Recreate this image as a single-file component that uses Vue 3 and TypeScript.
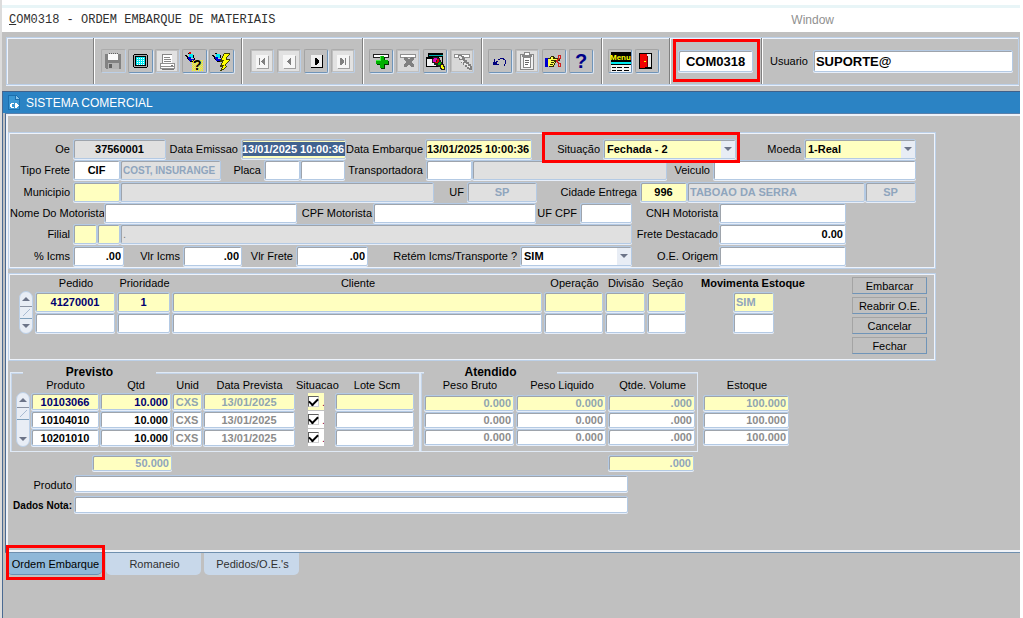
<script setup lang="ts">
interface Shape { d?: string; f: string; s?: string; t?: string; x?: number; y?: number; size?: number }
interface Tool { name: string; label: string; off?: boolean }
interface Cell { k: 'label' | 'field' | 'combo'; t?: string; id?: string; c?: string; label?: string }

const dots = (x: number, y: number, cols: number, rows: number): string => {
  let d = ''
  for (let r = 0; r < rows; r++)
    for (let c = 0; c < cols; c++) d += `M${x + c * 2} ${y + r * 2}h1v1h-1z`
  return d
}
const torch: Shape[] = [
  { d: 'M3 6h2v1h-2zM4 7h2v1h-2zM5 8h2v2h-2zM6 10h1v1h-1z', f: '#000' },
  { d: 'M7 5h4v4h-4z', f: '#00e8f0' },
  { d: 'M6 8h3v2h3v3h-3v-1h-2v-2h-1z', f: '#0000d0' },
  { d: 'M6 4h2v1h-2zM11 6h1v3h-1zM12 9h1v4h-1zM8 12h3v1h-3z', f: '#000' }
]
const plaque = (off: boolean): Shape[] => off
  ? [{ d: 'M2 2h20v20h-20z', f: '#e2e2e2' }, { d: 'M6 6h12v13h-12z', f: '#f6f6f6' }, { d: 'M18 7h1v13h-12v-1h11z', f: '#a0a0a0' }]
  : [{ d: 'M7 6h11v12h-11z', f: '#efefef' }, { d: 'M18 6h1v13h-12v-1h11z', f: '#000' }]

const icons: Record<string, Shape[]> = {
  save: [
    { d: 'M4 5h16v15h-15l-1-1z', f: '#828282' },
    { d: 'M7 5h10v6h-10z', f: '#fafafa' },
    { d: 'M7 14h11v6h-11z', f: '#b4b4b4' },
    { d: 'M8 15h3v4h-3z', f: '#626262' },
    { d: dots(8, 4, 5, 1), f: '#606060' }
  ],
  screen: [
    { d: 'M6 5h13v1h1v12h-1v1h-13v-1h-1v-12h1z', f: '#000' },
    { d: 'M6 6h13v12h-13z', f: '#a8a8a8' },
    { d: 'M7 7h11v10h-11z', f: '#000' },
    { d: 'M8 8h9v8h-9z', f: '#00e8f0' },
    { d: dots(9, 9, 4, 4), f: '#fff' }
  ],
  print: [
    { d: 'M2 2h20v20h-20z', f: '#e2e2e2' },
    { d: 'M7 5h10v9h-10z', f: '#888' }, { d: 'M8 6h9v8h-9z', f: '#fff' },
    { d: 'M9 8h6v1h-6zM9 10h7v1h-7zM9 12h7v1h-7z', f: '#888' },
    { d: 'M5 14h15v6h-15z', f: '#909090' }, { d: 'M6 15h13v2h-13zM6 18h13v1h-13z', f: '#fff' },
    { d: 'M7 20h12v1h-12zM16 16h2v1h-2z', f: '#777' }
  ],
  torchHelp: [
    ...torch, { d: 'M7 3h2v2h-2z', f: '#e00000' },
    { d: dots(10, 11, 6, 6) + dots(11, 12, 5, 5), f: '#ffff00' },
    { t: '?', f: '#000', x: 11, y: 21, size: 14 }
  ],
  torchRun: [
    ...torch,
    { d: 'M15 4h6v2h-1v1h-1v1h-1v2h3v2h-1v1h-1v1h-1v1h-1v2h1v1h-1v1h-1v1h-1v1h-2v1h-2v-1h1v-2h1v-1h-2v-2h1v-2h1v-1h-2v-2h1v-2h1v-2h1v-2h1z', f: '#404000' },
    { d: 'M16 5h4v1h-1v1h-1v1h-1v3h3v1h-1v1h-1v1h-1v1h-1v2h1v1h-1v1h-1v1h-2v-1h1v-2h1v-1h-2v-2h1v-2h1v-1h-2v-2h1v-2h1v-2h1z', f: '#ffff00' }
  ],
  first: [...plaque(true), { d: 'M9 9h1v7h-1zM14 9h1v7h-1l-3-3v-1z', f: '#808080' }],
  prev: [...plaque(true), { d: 'M13 9h1v7h-1l-3-3v-1z', f: '#808080' }],
  next: [...plaque(false), { d: 'M11 9h1l3 3v1l-3 3h-1z', f: '#000' }],
  last: [...plaque(true), { d: 'M14 9h1v7h-1zM9 9h1l3 3v1l-3 3h-1z', f: '#808080' }],
  add: [
    { d: 'M4 5h16v4h-16z', f: '#202020' }, { d: 'M5 6h14v2h-14z', f: '#fff' },
    { d: 'M12 8h4v4h4v4h-4v4h-4v-4h-4v-4h4z', f: '#003c00' },
    { d: 'M11 7h4v4h4v4h-4v4h-4v-4h-4v-4h4z', f: '#00b000' },
    { d: 'M11 7h1v5h-5v-1h4z', f: '#40f040' }
  ],
  remove: [
    { d: 'M2 2h20v20h-20z', f: '#d8d8d8' },
    { d: 'M4 5h16v4h-16z', f: '#909090' }, { d: 'M5 6h14v2h-14z', f: '#fff' },
    { d: 'M8 8h3v1h1v1h2v-1h1v-1h3v3h-1v1h-1v2h1v1h1v3h-3v-1h-1v-1h-2v1h-1v1h-3v-3h1v-1h1v-2h-1v-1h-1z', f: '#808080' }
  ],
  query: [
    { d: 'M5 4h15v12h-15z', f: '#000' }, { d: 'M6 6h14v1h-14z', f: '#00b0b0' }, { d: 'M16 8h3v7h-3z', f: '#c0c0c0' },
    { d: 'M3 8h13v10h-13z', f: '#000' }, { d: 'M4 10h11v7h-11z', f: '#f4f4f4' },
    { d: 'M10 8h5v1h2v2h1v2h1v2h2v2h1v4h-4v-1h-1v-2h-2v-1h-2v-1h-2v-2h-2v-4h1z', f: '#202020' },
    { d: 'M11 9h3v2h-1v2h-3v-3h1z', f: '#e000c0' }, { d: 'M14 10h2v3h-1v1h-3v-1h2z', f: '#e00000' },
    { d: 'M16 13h2v2h-1v1h-2v-2h1z', f: '#00b000' }, { d: 'M18 16h2v2h1v2h-2v-1h-1z', f: '#ffff00' }
  ],
  cancelQuery: [
    { d: 'M2 2h20v20h-20z', f: '#d8d8d8' },
    { d: 'M4 5h16v4h-16z', f: '#909090' }, { d: 'M5 6h14v2h-14z', f: '#fff' },
    { d: 'M8 6h4v1h2v2h1v2h2v2h2v2h2v2h1v4h-3v-1h-2v-2h-2v-2h-2v-2h-2v-3h-2v-2h-1z', f: '#808080' },
    { d: 'M9 7h2v1h1v2h-2v-1h-1zM11 11h2v1h1v1h-1v1h-1v-1h-1zM14 14h2v1h2v2h2v2h-1v-1h-2v-2h-3z', f: '#e8e8e8' }
  ],
  undo: [{ d: 'M6 10h1v3h1v-1h2v-2h2v-1h4v1h1v1h1v4h-1v2h-1v-2h1v-4h-2v-1h-3v1h-2v2h-1v2h2v1h-6z', f: '#00007c' }],
  clip: [
    { d: 'M2 2h20v20h-20z', f: '#dedede' },
    { d: 'M5 5h14v16h-14z', f: '#888' }, { d: 'M6 6h12v14h-12z', f: '#f0f0f0' },
    { d: 'M8 8h8v11h-8z', f: '#888' }, { d: 'M9 9h6v9h-6z', f: '#fff' },
    { d: 'M9 3h6v3h2v2h-10v-2h2z', f: '#888' }, { d: 'M10 4h4v2h-4z', f: '#fff' },
    { d: 'M10 11h4v1h-4zM10 13h4v1h-4zM10 15h3v1h-3z', f: '#666' }
  ],
  hand: [
    { d: 'M3 9h3v9h-3z', f: '#0000d0' },
    { d: 'M6 9h2v-1h1v-1h3v1h1v1h5v3h-4v2h-1v2h-1v2h-5v-1h-1z', f: '#303000' },
    { d: 'M6 10h3v-2h2v2h6v1h-5v2h1v1h-1v2h-1v1h-5z', f: '#ffff50' },
    { d: 'M9 11h3v1h-3zM9 13h3v1h-3zM8 15h3v1h-3z', f: '#303000' },
    { d: 'M16 6h3v4h-3zM17 7v2h1v-2zM16 14h3v4h-3zM17 15v2h1v-2zM15 10h2v1h-2zM14 11h2v2h-2zM15 13h2v1h-2z', f: '#d02020' }
  ],
  help: [{ t: '?', f: '#000088', x: 6, y: 19, size: 20 }],
  menu: [
    { d: 'M3 3h20v10h-20z', f: '#000' }, { t: 'Menu', f: '#ffff00', x: 2, y: 11, size: 8 },
    { d: 'M3 13h20v2h-20z', f: '#00e8f0' }, { d: 'M3 15h20v1h-20z', f: '#000' },
    { d: 'M3 16h20v7h-20z', f: '#f4f4f4' },
    { d: 'M4 18h4v1h-4zM9 18h5v1h-5zM16 18h5v1h-5zM4 21h4v1h-4zM9 21h5v1h-5zM16 21h5v1h-5z', f: '#000' }
  ],
  exit: [
    { d: 'M4 4h13v16h-13z', f: '#000' }, { d: 'M12 5h4v13h-4z', f: '#e8e8e8' },
    { d: 'M5 5h7v13h-2v1h-5z', f: '#f00000' }, { d: 'M9 12h2v1h-2z', f: '#ffff00' },
    { d: 'M12 7h1v11h-1z', f: '#700000' }
  ]
}

const groups: Tool[][] = [
  [{ name: 'save', label: 'Salvar', off: true }, { name: 'screen', label: 'Tela' }, { name: 'print', label: 'Imprimir', off: true },
    { name: 'torchHelp', label: 'Entrar consulta' }, { name: 'torchRun', label: 'Executar consulta' }],
  [{ name: 'first', label: 'Primeiro', off: true }, { name: 'prev', label: 'Anterior', off: true },
    { name: 'next', label: 'Proximo' }, { name: 'last', label: 'Ultimo', off: true }],
  [{ name: 'add', label: 'Inserir' }, { name: 'remove', label: 'Remover', off: true },
    { name: 'query', label: 'Consultar' }, { name: 'cancelQuery', label: 'Cancelar consulta', off: true }],
  [{ name: 'undo', label: 'Desfazer' }, { name: 'clip', label: 'Colar', off: true },
    { name: 'hand', label: 'Recortar' }, { name: 'help', label: 'Ajuda' }],
  [{ name: 'menu', label: 'Menu' }, { name: 'exit', label: 'Sair' }]
]

const L = (t: string, id: string, c = ''): Cell => ({ k: 'label', t, id, c })
const F = (id: string, t = '', c = ''): Cell => ({ k: 'field', t, id, c })
const rows: Cell[][] = [
  [L('Oe', 'oe'), F('oe', '37560001', 'ro mid'), L('Data Emissao', 'emi'), F('emi', '13/01/2025 10:00:36', 'sel'),
    L('Data Embarque', 'emb'), F('emb', '13/01/2025 10:00:36', 'yel tight'),
    { k: 'combo', label: 'Situação', id: 'sit', t: 'Fechada - 2', c: 'marked yellow' },
    { k: 'combo', label: 'Moeda', id: 'moe', t: '1-Real', c: 'yellow' }],
  [L('Tipo Frete', 'tf'), F('tf', 'CIF', 'mid'), F('tfd', 'COST, INSURANGE', 'ro dim small'), L('Placa', 'pl'), F('pl'), F('pl2'),
    L('Transportadora', 'tr'), F('tr'), F('trd', '', 'ro'), L('Veiculo', 've'), F('ve')],
  [L('Municipio', 'mu'), F('mu', '', 'yel'), F('mud', '', 'ro'), L('UF', 'uf'), F('uf', 'SP', 'ro dim mid'),
    L('Cidade Entrega', 'ci'), F('ci', '996', 'yel mid'), F('cid', 'TABOAO DA SERRA', 'ro dim'), F('ciu', 'SP', 'ro dim mid')],
  [L('Nome Do Motorista', 'nm', 'near'), F('nm'), L('CPF Motorista', 'cpf', 'near'), F('cpf'), L('UF CPF', 'ucp'), F('ucp'),
    L('CNH Motorista', 'cnh', 'near'), F('cnh')],
  [L('Filial', 'fi'), F('fi', '', 'yel'), F('fi2', '', 'yel'), F('fid', '.', 'ro thin'), L('Frete Destacado', 'fd', 'near'), F('fd', '0.00', 'end')],
  [L('% Icms', 'ic'), F('ic', '.00', 'end'), L('Vlr Icms', 'vi'), F('vi', '.00', 'end'), L('Vlr Frete', 'vf'), F('vf', '.00', 'end'),
    { k: 'combo', label: 'Retém Icms/Transporte ?', id: 'ret', t: 'SIM', c: '' }, L('O.E. Origem', 'oo', 'near'), F('oo')]
]

const orderCols = ['Pedido', 'Prioridade', 'Cliente', 'Operação', 'Divisão', 'Seção']
const orders = [['41270001', '1', '', '', '', ''], ['', '', '', '', '', '']]
const actions = ['Embarcar', 'Reabrir O.E.', 'Cancelar', 'Fechar']
const products = ['10103066', '10104010', '10201010']
const weights = ['0.000', '0.000', '.000']
</script>

<template>
  <div class="app">
    <header class="caption">
      <span class="name"><u>C</u>OM0318 - ORDEM EMBARQUE DE MATERIAIS</span>
      <span class="win">Window</span>
    </header>

    <div class="toolbar">
      <div class="group blank"></div>
      <div v-for="(g, i) in groups" :key="i" class="group" :class="'g' + i">
        <button v-for="b in g" :key="b.name" type="button" class="tool" :class="{ off: b.off }" :aria-label="b.label">
          <svg viewBox="0 0 24 24" shape-rendering="crispEdges">
            <template v-for="(s, n) in icons[b.name]" :key="n">
              <text v-if="s.t" :x="s.x" :y="s.y" :font-size="s.size" :fill="s.f" font-weight="bold">{{ s.t }}</text>
              <path v-else :d="s.d" :fill="s.f" :stroke="s.s" fill-rule="evenodd" />
            </template>
          </svg>
        </button>
      </div>
      <div class="group prog">
        <div class="progbox"><input class="fld big mid" value="COM0318" aria-label="Programa"></div>
      </div>
      <div class="group user">
        <label for="usr">Usuario</label>
        <input id="usr" class="fld big" value="SUPORTE@">
      </div>
    </div>

    <main class="window">
      <div class="titlebar">
        <svg viewBox="0 0 12 15" shape-rendering="crispEdges">
          <path d="M0 0h8l4 4v11h-12z" fill="#1b6fae" /><path d="M1 1h6v4h4v9h-10z" fill="#3a97d3" />
          <path d="M8 1l3 3h-3z" fill="#8cc4ea" />
          <path d="M3 8h3v1h-2v3h2v1h-3v-1h-1v-3h1zM7 8h1l3 2v1l-3 2h-1z" fill="#fff" />
        </svg>
        <span>SISTEMA COMERCIAL</span>
      </div>

      <div class="canvas">
        <section class="panel form">
          <div v-for="(r, i) in rows" :key="i" class="row" :class="'r' + i">
            <template v-for="c in r" :key="c.k + c.id">
              <label v-if="c.k === 'label'" :for="c.id" :class="c.c">{{ c.t }}</label>
              <input v-else-if="c.k === 'field'" :id="c.id" class="fld" :class="c.c" :value="c.t" :aria-label="c.id">
              <div v-else class="pair" :class="c.c">
                <label :for="c.id">{{ c.label }}</label>
                <span class="combo"><select :id="c.id" class="fld"><option>{{ c.t }}</option></select></span>
              </div>
            </template>
          </div>
        </section>

        <section class="panel orders">
          <div class="scroll short">
            <button type="button" aria-label="Acima"><i class="up"></i></button><span class="thumb"></span>
            <button type="button" aria-label="Abaixo"><i class="down"></i></button>
          </div>
          <table class="otable">
            <colgroup><col class="o1"><col class="o2"><col><col class="o4"><col class="o5"><col class="o6"><col class="o7"></colgroup>
            <thead><tr><th v-for="h in orderCols" :key="h">{{ h }}</th><th class="strong">Movimenta Estoque</th></tr></thead>
            <tbody>
              <tr v-for="(o, i) in orders" :key="i">
                <td v-for="(v, n) in o" :key="n"><input class="fld mid" :class="{ yel: i === 0, navy: i === 0 }" :value="v" :aria-label="orderCols[n]"></td>
                <td class="mov"><input class="fld dim" :class="{ yel: i === 0 }" :value="i === 0 ? 'SIM' : ''" aria-label="Movimenta Estoque"></td>
              </tr>
            </tbody>
          </table>
          <div class="actions"><button v-for="a in actions" :key="a" type="button">{{ a }}</button></div>
        </section>

        <div class="items">
          <section class="box previsto">
            <h2>Previsto</h2>
            <div class="inner">
              <div class="scroll tall">
                <button type="button" aria-label="Subir"><i class="up"></i></button><span class="thumb"></span>
                <button type="button" aria-label="Descer"><i class="down"></i></button>
              </div>
              <table class="ptable">
                <colgroup><col class="p1"><col class="p2"><col class="p3"><col class="p4"><col class="p5"><col></colgroup>
                <thead><tr><th>Produto</th><th>Qtd</th><th>Unid</th><th>Data Prevista</th><th>Situacao</th><th>Lote Scm</th></tr></thead>
                <tbody>
                  <tr v-for="(p, i) in products" :key="p" :class="{ cur: i === 0 }">
                    <td><input class="fld mid" :value="p" aria-label="Produto"></td>
                    <td><input class="fld end" value="10.000" aria-label="Qtd"></td>
                    <td><input class="fld gray mid" value="CXS" aria-label="Unid"></td>
                    <td><input class="fld gray mid" value="13/01/2025" aria-label="Data Prevista"></td>
                    <td class="chk"><label><input type="checkbox" checked aria-label="Situacao"><span>.</span></label></td>
                    <td class="lote"><input class="fld" value="" aria-label="Lote Scm"></td>
                  </tr>
                </tbody>
              </table>
            </div>
          </section>
          <section class="box atendido">
            <h2>Atendido</h2>
            <table class="wtable">
              <colgroup><col class="w1"><col class="w1"><col></colgroup>
              <thead><tr><th>Peso Bruto</th><th>Peso Liquido</th><th>Qtde. Volume</th></tr></thead>
              <tbody>
                <tr v-for="(p, i) in products" :key="p" :class="{ cur: i === 0 }">
                  <td v-for="(w, n) in weights" :key="n"><input class="fld gray end" :value="w" aria-label="Atendido"></td>
                </tr>
              </tbody>
            </table>
          </section>
          <table class="wtable estoque">
            <thead><tr><th>Estoque</th></tr></thead>
            <tbody>
              <tr v-for="(p, i) in products" :key="p" :class="{ cur: i === 0 }"><td><input class="fld gray end" value="100.000" aria-label="Estoque"></td></tr>
            </tbody>
          </table>
        </div>

        <div class="totals">
          <input class="fld yel dim end" value="50.000" aria-label="Total Qtd">
          <input class="fld yel dim end" value=".000" aria-label="Total Volume">
        </div>
        <div class="line"><label for="prd">Produto</label><input id="prd" class="fld"></div>
        <div class="line note"><label for="nota">Dados Nota:</label><input id="nota" class="fld"></div>
      </div>

      <nav class="tabs">
        <button type="button" class="on">Ordem Embarque</button>
        <button type="button">Romaneio</button>
        <button type="button">Pedidos/O.E.'s</button>
      </nav>
    </main>
  </div>
</template>

<style>
html, body { background: #c0c0c0; }
#app { min-height: 100vh; display: flex; }
</style>

<style scoped>
.app {
  flex: 1; min-width: 0; display: flex; flex-direction: column; border-left: 2px solid #dcdcdc; border-right: 3px solid #fff;
  font: 11px/14px "Liberation Sans", Arial, sans-serif; color: #000;
}
.app * { box-sizing: border-box; }
.caption {
  height: 32px; padding: 8px 186px 0 7px; display: flex; justify-content: space-between; align-items: center;
  background: linear-gradient(#fff 5px, #e8f5f7 5px, #e8f5f7 8px, #fff 8px);
}
.name { font: 12px/24px "Liberation Mono", monospace; color: #303030; }
.win { font-size: 12px; color: #909090; }

.toolbar { margin: 5px 1px 6px 4px; height: 48px; display: flex; border: 1px solid #bcd0e8; box-shadow: inset 1px 1px #eef3fb, 0 1px #e6eefa; }
.group { display: flex; align-items: center; gap: 3px; padding-left: 6px; border-right: 1px solid #808080; box-shadow: 1px 0 #fff; flex: none; }
.blank { width: 87px; }
.g0 { width: 148px; padding-left: 7px; gap: 2px; } .g1 { width: 121px; padding-left: 8px; } .g2 { width: 119px; }
.g3 { width: 120px; } .g4 { width: 68px; }
.tool {
  width: 24px; height: 24px; padding: 0; background: none; border: 1px solid; border-radius: 2px;
  border-color: #a4a4a4 #6f94b8 #6f94b8 #a4a4a4; box-shadow: 1px 1px #dbe6f4;
}
.g0 .tool { width: 25px; }
.tool.off { border-color: #acacac #bcd0e8 #bcd0e8 #acacac; box-shadow: none; }
.tool svg { display: block; width: 24px; height: 24px; margin: -1px; }
.prog { width: 92px; padding: 0; }
.progbox { position: relative; margin-left: 8px; width: 75px; }
.progbox::after, .marked::after, .tabs .on::after { content: ""; position: absolute; border: 3px solid #f00; pointer-events: none; z-index: 2; }
.progbox::after { inset: -11px -7px -10px -5px; }
.user { flex: 1; border: 0; box-shadow: none; padding: 0 5px 0 8px; gap: 5px; }
.user .fld { flex: 1; }

.fld {
  display: block; width: 100%; min-width: 0; height: 20px; margin: 0; padding: 0 2px; outline: 0; border: 1px solid #b4cae4; border-radius: 2px;
  background: #fff; color: #000; font: bold 11px/14px "Liberation Sans", Arial, sans-serif;
  box-shadow: inset 1px 1px #9ea4ac, 0 1px #e6eefa;
}
.big { height: 22px; font-size: 13px; }
.mid { text-align: center; }
.end { text-align: right; padding-right: 2px; }
.ro { background: #e0e0e0; }
.thin { font-weight: normal; color: #808080; }
.yel, .cur .fld { background: #ffffc0; }
.dim { color: #8fa5bd; }
.small { font-size: 10px; }
.gray { color: #8c8c8c; }
.cur .gray { color: #8fa5b0; }
.navy, .cur .fld:not(.gray) { color: #000070; }
.tight { padding: 0 1px; }
.sel { padding: 2px 0; color: #fff; background: linear-gradient(#41628f, #41628f) content-box, #ffffc0; }

.window { flex: 1; background: #c0c0c0; border-left: 1px solid #4a6a92; border-top: 1px solid #40618a; }
.titlebar { height: 21px; padding-left: 5px; display: flex; align-items: center; gap: 6px; background: #2b83c4; color: #fff; font-size: 12px; }
.titlebar svg { width: 12px; height: 15px; }
.canvas {
  margin-left: 2px; border-left: 1px solid #4a6a92; border-top: 1px solid #5880ac; border-bottom: 1px solid #6f8fae; padding: 18px 0 39px 2px;
  box-shadow: inset 2px 2px #eef2f8, inset 0 -2px #f0f3f8;
}
.panel { margin-right: 84px; border: 1px solid #bcd0e8; box-shadow: inset 1px 1px #eef3fb, inset -1px -1px #eef3fb; padding: 1px; }
.form { display: grid; grid-template-rows: 21px 22px 21px 21px 22px 20px; padding: 6px 0 2px 1px; }
.row { display: grid; }
.row label, .user label { text-align: right; padding-right: 3px; line-height: 20px; white-space: nowrap; min-width: 0; }
.user label { padding: 0; }
.row .near { padding-right: 1px; }
.r0 { grid-template-columns: 63px 93px 75px 105px 79px 107px 1fr 180px 19px; }
.r1 { grid-template-columns: 63px 47px 101px 43px 36px 45px 81px 46px 1fr 46px 203px 19px; }
.r2 { grid-template-columns: 63px 47px 1fr 33px 70px 103px 47px 178px 51px 19px; }
.r3 { grid-template-columns: 94px 1fr 76px 163px 44px 52px 87px 127px 89px; }
.r4 { grid-template-columns: 63px 24px 23px 1fr 87px 127px 89px; }
.r5 { grid-template-columns: 63px 51px 59px 59px 54px 72px 1fr 87px 127px 89px; }
.pair { position: relative; display: grid; grid-template-columns: 71px 1fr; }
.pair:nth-child(8) { grid-template-columns: 68px 1fr; }
.r5 .pair { grid-template-columns: 1fr 112px; }
.marked::after { inset: -7px -4px -3px 10px; }
.combo { position: relative; }
.combo select { appearance: none; padding-left: 3px; }
.yellow select { background: #ffffc0; }
.combo::before { content: ""; position: absolute; top: 2px; right: 1px; width: 14px; height: 17px; background: #e8edf5; z-index: 1; pointer-events: none; }
.combo::after { content: ""; position: absolute; top: 8px; right: 4px; border: 4px solid transparent; border-top-color: #6c7488; border-bottom: 0; z-index: 1; pointer-events: none; }

.orders { margin-top: 4px; min-height: 88px; display: flex; align-items: flex-start; padding: 3px 8px 3px 10px; }
table { border-collapse: collapse; table-layout: fixed; }
th { font-weight: normal; padding: 0; white-space: nowrap; line-height: 12px; vertical-align: top; }
td { padding: 0 2px 0 0; vertical-align: top; }
.otable { flex: 1; width: 0; margin: 0 34px 0 2px; }
.otable th { height: 15px; }
.otable th.strong { font-weight: bold; }
.otable td { height: 21px; }
.o1 { width: 82px; } .o2 { width: 55px; } .o4 { width: 61px; } .o5 { width: 42px; } .o6 { width: 41px; } .o7 { width: 130px; }
.otable .mov { padding: 0 44px 0 45px; }
.actions { width: 75px; display: grid; gap: 3px; }
.actions button {
  height: 17px; padding: 0; font: inherit; background: #c0c0c0; border: 1px solid; border-color: #a4a4a4 #6f94b8 #6f94b8 #a4a4a4;
}
.scroll { width: 14px; flex: none; display: flex; flex-direction: column; background: #e8edf5; border: 1px solid #bcd0e8; border-radius: 7px; overflow: hidden; }
.scroll button { height: 14px; flex: none; padding: 0; border: 0; background: none; display: flex; align-items: center; justify-content: center; }
.scroll i { border: 4px solid transparent; border-top: 0; border-bottom-color: #6c7488; }
.scroll .down { border-top: 4px solid #6c7488; border-bottom: 0; }
.thumb { height: 13px; margin-bottom: auto; border-top: 1px solid #8b93a3; border-bottom: 1px solid #7fa0bc; background: linear-gradient(135deg, #e8edf5 47%, #a9bbd2 47%, #a9bbd2 53%, #e8edf5 53%) center / 7px 7px no-repeat; }
.short { height: 43px; margin-top: 14px; }
.tall { height: 55px; margin-top: 13px; }

.items { display: flex; margin: 11px 229px 0 2px; }
.box { border: 1px solid #e0eaf6; box-shadow: inset 1px 1px #c4d4e8; height: 80px; }
.previsto { flex: 1; min-width: 0; }
.atendido { width: 278px; padding-left: 3px; }
.box h2 { margin: -8px 0 0 12px; width: 133px; height: 14px; background: #c0c0c0; text-align: center; font-size: 12px; line-height: 15px; }
.box.atendido h2 { margin-left: 0; }
.inner { display: flex; padding-left: 5px; }
.ptable { flex: 1; width: 0; margin-left: 1px; }
.ptable th { height: 14px; }
.ptable td { height: 18px; padding-right: 1px; }
.ptable .fld { height: 17px; }
.p1 { width: 69px; } .p2 { width: 72px; } .p3 { width: 31px; } .p4 { width: 93px; } .p5 { width: 39px; }
.ptable .lote { padding-right: 5px; }
.chk label { display: flex; align-items: center; width: 16px; height: 17px; margin-left: 12px; background: #fff; overflow: hidden; }
.cur .chk label { background: #ffffc0; }
.chk span { color: #800040; margin-left: 3px; }
.chk input { appearance: none; flex: none; margin: 0; width: 11px; height: 11px; border: 1px solid; border-color: #606060 #d0d0d0 #d0d0d0 #606060; background: #fff; display: grid; place-items: center; }
.chk input::before { content: ""; width: 7px; height: 4px; margin-top: -2px; border: solid #000; border-width: 0 0 2px 2px; transform: rotate(-45deg); }
.wtable { width: 100%; }
.wtable th { height: 16px; }
.wtable td { height: 17px; }
.wtable .fld { height: 16px; }
.w1 { width: 92px; }
.estoque { width: 88px; height: 67px; margin: 7px 0 0 5px; }
.totals { display: flex; justify-content: space-between; margin: 3px 326px 4px 84px; }
.totals .fld { width: 80px; height: 16px; }
.totals .fld:last-child { width: 86px; }
.line { display: flex; margin: 0 392px 4px 0; }
.line label { width: 66px; padding: 3px 2px 0 0; text-align: right; }
.line .fld { flex: 1; height: 17px; }
.note { margin-bottom: 0; }
.note label { font-size: 10px; font-weight: bold; white-space: nowrap; padding-right: 2px; }

.tabs { display: flex; gap: 3px; padding-left: 4px; }
.tabs button { position: relative; width: 95px; height: 22px; padding: 0 0 0 2px; border: 0; border-radius: 0 0 5px 5px; background: #c8d8ea; color: #303030; font: inherit; white-space: nowrap; }
.tabs .on { background: #90b8d8; color: #000; border-bottom: 1px solid #6a90b4; margin-right: 1px; }
.tabs .on::after { inset: -8px -3px -6px -1px; }
</style>
